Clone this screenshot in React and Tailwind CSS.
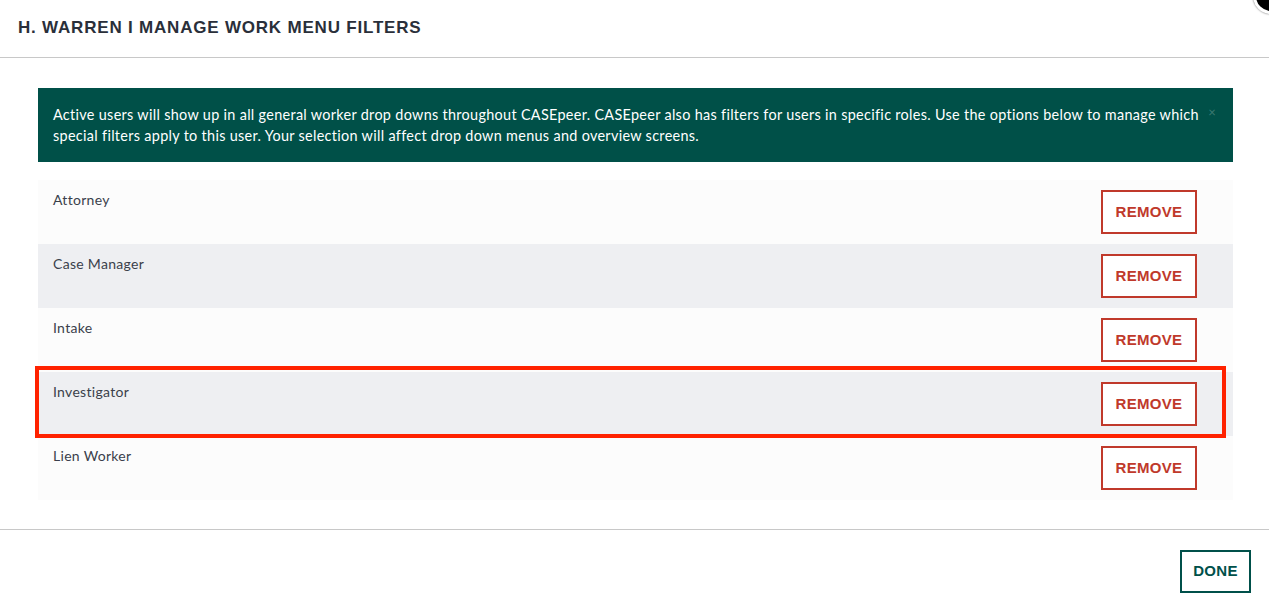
const filters = ['Attorney', 'Case Manager', 'Intake', 'Investigator', 'Lien Worker'];

export default function App() {
  return (
    <div className="relative w-[1269px] h-[610px] overflow-hidden bg-white font-['Lato',sans-serif]">
      {/* close button peeking from the corner */}
      <div className="absolute -top-[22px] -right-[20px] w-[36px] h-[36px] rounded-full bg-black border-[3px] border-white shadow-[0_0_2px_rgba(0,0,0,0.6)]" />

      <div className="h-[58px] px-[18px] flex items-center border-b border-[#c8c8c8]">
        <h2 className="font-['Liberation_Sans',sans-serif] font-bold text-[17px] tracking-[0.8px] text-[#2a2f3a] mt-[-1px]">
          H. WARREN I MANAGE WORK MENU FILTERS
        </h2>
      </div>

      <div className="pl-[38px] pr-[36px] pt-[30px] pb-[29px] border-b border-[#c8c8c8]">
        <div className="relative bg-[#005048] text-white text-[14.4px] tracking-[0.32px] leading-[21px] pl-[15px] pr-[30px] pt-[16px] h-[74px]">
          <p className="max-w-[1150px]">
            Active users will show up in all general worker drop downs throughout CASEpeer. CASEpeer also has filters for users in specific roles. Use the options below to manage which special filters apply to this user. Your selection will affect drop down menus and overview screens.
          </p>
          <span className="absolute right-[17px] top-[14px] text-[13px] text-[#3d7a72]">×</span>
        </div>

        <div className="mt-[18px] relative">
          {filters.map((name, i) => (
            <div
              key={name}
              className={`h-[64px] flex items-start justify-between pl-[15px] pr-[36px] ${i % 2 === 0 ? 'bg-[#fcfcfc]' : 'bg-[#eeeff2]'}`}
            >
              <span className="text-[14px] tracking-[0.3px] text-[#3a3f4b] leading-[20px] pt-[10px]">{name}</span>
              <button className="mt-[10px] w-[96px] h-[44px] border-2 border-[#c0392b] bg-white text-[#c0392b] font-['Liberation_Sans',sans-serif] font-bold text-[15px] tracking-[0.3px]">
                REMOVE
              </button>
            </div>
          ))}
          {/* annotation highlight */}
          <div className="absolute left-[-3px] top-[186px] w-[1191px] h-[72px] border-4 border-[#ff2200] pointer-events-none" />
        </div>
      </div>

      <div className="flex justify-end pr-[18px] pt-[20px]">
        <button className="w-[71px] h-[43px] border-2 border-[#00504a] bg-white text-[#00504a] font-['Liberation_Sans',sans-serif] font-bold text-[15px] tracking-[0.3px]">
          DONE
        </button>
      </div>
    </div>
  );
}
